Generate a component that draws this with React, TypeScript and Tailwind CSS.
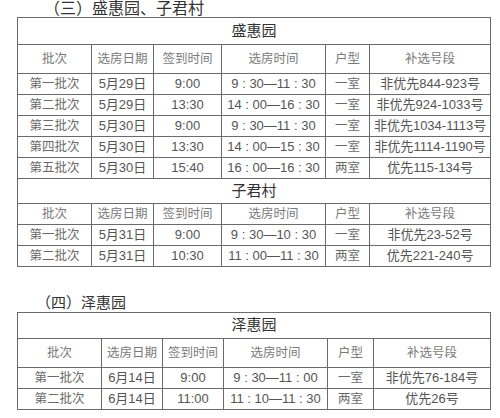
import React from 'react';

type Row = string[];

const font = { fontFamily: '"Liberation Sans", "Noto Sans CJK SC", sans-serif' };

const head = ['批次', '选房日期', '签到时间', '选房时间', '户型', '补选号段'];

const shengHui: Row[] = [
  ['第一批次', '5月29日', '9:00', '9 : 30—11 : 30', '一室', '非优先844-923号'],
  ['第二批次', '5月29日', '13:30', '14 : 00—16 : 30', '一室', '非优先924-1033号'],
  ['第三批次', '5月30日', '9:00', '9 : 30—11 : 30', '一室', '非优先1034-1113号'],
  ['第四批次', '5月30日', '13:30', '14 : 00—15 : 30', '一室', '非优先1114-1190号'],
  ['第五批次', '5月30日', '15:40', '16 : 00—16 : 30', '两室', '优先115-134号'],
];

const ziJun: Row[] = [
  ['第一批次', '5月31日', '9:00', '9 : 30—10 : 30', '一室', '非优先23-52号'],
  ['第二批次', '5月31日', '10:30', '11 : 00—11 : 30', '两室', '优先221-240号'],
];

const zeHui: Row[] = [
  ['第一批次', '6月14日', '9:00', '9 : 30—11 : 00', '一室', '非优先76-184号'],
  ['第二批次', '6月14日', '11:00', '11 : 10—11 : 30', '两室', '优先26号'],
];

const cell = 'border border-[#6b6b6b] text-center p-0 whitespace-nowrap';

const TitleRow = ({ name, h }: { name: string; h: string }) => (
  <tr>
    <td colSpan={6} className={`${cell} ${h} text-[15px] text-[#333]`}>
      {name}
    </td>
  </tr>
);

const HeadRow = ({ h }: { h: string }) => (
  <tr>
    {head.map((t) => (
      <td key={t} className={`${cell} ${h} text-[12.5px] text-[#7a7a7a]`}>
        {t}
      </td>
    ))}
  </tr>
);

const DataRows = ({ rows }: { rows: Row[] }) => (
  <>
    {rows.map((r, i) => (
      <tr key={i}>
        {r.map((t, j) => (
          <td
            key={j}
            className={`${cell} h-[21px] ${j === 0 || j === 4 ? 'text-[12.5px] text-[#6a6a6a]' : 'text-[13px] text-[#555]'}`}
          >
            {t}
          </td>
        ))}
      </tr>
    ))}
  </>
);

export default function App() {
  return (
    <div className="w-[500px] h-[418px] bg-white overflow-hidden px-[17px] pr-[10px]" style={font}>
      <div className="h-[17px] pl-[27px] text-[16px] leading-[17px] text-[#333]">（三）盛惠园、子君村</div>
      <table className="border-collapse table-fixed w-[473px]">
        <colgroup>
          <col className="w-[74px]" />
          <col className="w-[62px]" />
          <col className="w-[68px]" />
          <col className="w-[104px]" />
          <col className="w-[44px]" />
          <col className="w-[121px]" />
        </colgroup>
        <tbody>
          <TitleRow name="盛惠园" h="h-[27px]" />
          <HeadRow h="h-[29px]" />
          <DataRows rows={shengHui} />
          <TitleRow name="子君村" h="h-[25px]" />
          <HeadRow h="h-[21px]" />
          <DataRows rows={ziJun} />
        </tbody>
      </table>

      <div className="mt-[27px] h-[18px] pl-[19px] text-[15px] leading-[18px] text-[#333]">（四）泽惠园</div>
      <table className="border-collapse table-fixed w-[473px]">
        <colgroup>
          <col className="w-[84px]" />
          <col className="w-[61px]" />
          <col className="w-[61px]" />
          <col className="w-[104px]" />
          <col className="w-[46px]" />
          <col className="w-[117px]" />
        </colgroup>
        <tbody>
          <TitleRow name="泽惠园" h="h-[26px]" />
          <HeadRow h="h-[29px]" />
          <DataRows rows={zeHui} />
        </tbody>
      </table>
    </div>
  );
}
